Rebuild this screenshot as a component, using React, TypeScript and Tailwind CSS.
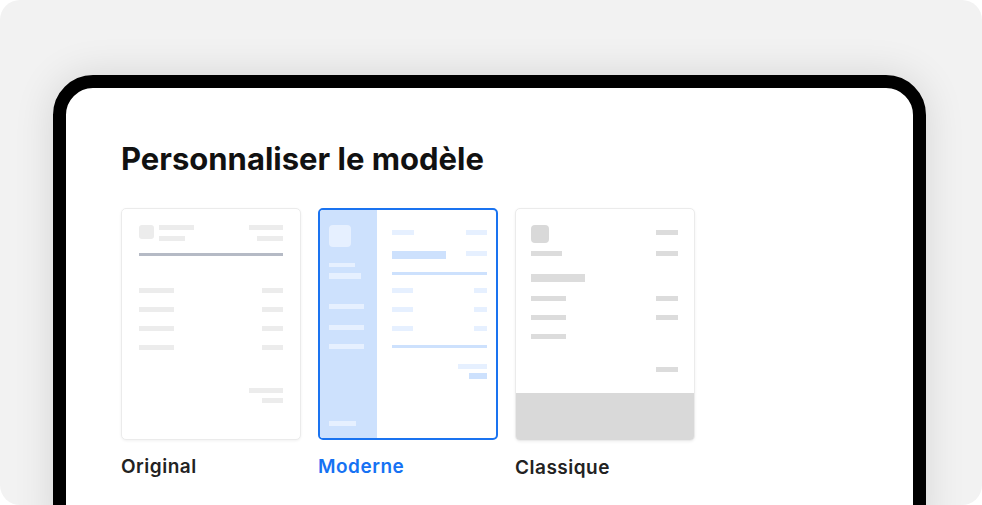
import React from "react";

function Bar({ w, h = 5, c, className = "" }: { w: number; h?: number; c: string; className?: string }) {
  // tiny placeholder bar inside a template thumbnail
  return <div className={`shrink-0 ${className}`} style={{ width: w, height: h, backgroundColor: c }} />;
}

function OriginalThumb() {
  const line = "#ececec";
  return (
    <div className="h-[232px] w-[180px] rounded-[5px] border border-[#ebebeb] bg-white px-[17px] pt-[16px] shadow-[0_1px_3px_rgba(0,0,0,0.06)]">
      <div className="flex justify-between">
        <div className="flex gap-[5px]">
          <div className="h-[14px] w-[15px] rounded-[3px] bg-[#ececec]" />
          <div className="flex flex-col">
            <Bar w={35} c={line} />
            <Bar w={26} c={line} className="mt-[6px]" />
          </div>
        </div>
        <div className="flex flex-col items-end">
          <Bar w={34} c={line} />
          <Bar w={26} c={line} className="mt-[6px]" />
        </div>
      </div>
      <div className="mt-[12px] h-[3px] bg-[#b5bac5]" />
      <div className="mt-[32px] flex flex-col gap-[14px]">
        {[0, 1, 2, 3].map((i) => (
          <div key={i} className="flex justify-between">
            <Bar w={35} c={line} />
            <Bar w={21} c={line} />
          </div>
        ))}
      </div>
      <div className="mt-[38px] flex flex-col items-end gap-[5px]">
        <Bar w={34} c={line} />
        <Bar w={21} c={line} />
      </div>
    </div>
  );
}

function ModerneThumb() {
  const dark = "#cde1fd";
  const light = "#e6f0ff";
  return (
    <div className="flex h-[232px] w-[180px] overflow-hidden rounded-[5px] border-2 border-[#1a73f0] bg-white">
      <div className="flex w-[57px] flex-col bg-[#cde1fd] pb-[12px] pl-[9px] pt-[15px]">
        <div className="h-[22px] w-[22px] rounded-[4px] bg-[#e6f0ff]" />
        <Bar w={26} h={4} c={light} className="mt-[16px]" />
        <Bar w={32} h={6} c={light} className="mt-[6px]" />
        <Bar w={35} c={light} className="mt-[25px]" />
        <Bar w={35} c={light} className="mt-[16px]" />
        <Bar w={35} c={light} className="mt-[14px]" />
        <Bar w={27} c={light} className="mt-auto" />
      </div>
      <div className="flex flex-1 flex-col pl-[15px] pr-[9px] pt-[20px]">
        <div className="flex justify-between">
          <Bar w={22} c={light} />
          <Bar w={21} c={light} />
        </div>
        <div className="mt-[16px] flex justify-between">
          <Bar w={54} h={8} c={dark} />
          <Bar w={21} c={light} />
        </div>
        <div className="mt-[13px] h-[3px] bg-[#cde1fd]" />
        <div className="mt-[13px] flex flex-col gap-[14px]">
          {[0, 1, 2].map((i) => (
            <div key={i} className="flex justify-between">
              <Bar w={21} c={light} />
              <Bar w={13} c={light} />
            </div>
          ))}
        </div>
        <div className="mt-[14px] h-[3px] bg-[#cde1fd]" />
        <div className="mt-[16px] flex flex-col items-end gap-[4px]">
          <Bar w={29} c={light} />
          <Bar w={18} h={6} c={dark} />
        </div>
      </div>
    </div>
  );
}

function ClassiqueThumb() {
  const line = "#dcdcdc";
  return (
    <div className="flex h-[233px] w-[180px] flex-col overflow-hidden rounded-[5px] border border-[#ebebeb] bg-white shadow-[0_1px_3px_rgba(0,0,0,0.06)]">
      <div className="pl-[15px] pr-[16px] pt-[16px]">
        <div className="flex justify-between">
          <div className="h-[18px] w-[18px] rounded-[4px] bg-[#d9d9d9]" />
          <Bar w={22} c={line} className="mt-[5px]" />
        </div>
        <div className="mt-[8px] flex justify-between">
          <Bar w={31} c={line} />
          <Bar w={22} c={line} />
        </div>
        <Bar w={54} h={8} c={line} className="mt-[18px]" />
        <div className="mt-[14px] flex flex-col gap-[14px]">
          <div className="flex justify-between">
            <Bar w={35} c={line} />
            <Bar w={22} c={line} />
          </div>
          <div className="flex justify-between">
            <Bar w={35} c={line} />
            <Bar w={22} c={line} />
          </div>
          <div className="flex justify-between">
            <Bar w={35} c={line} />
          </div>
        </div>
        <div className="mt-[28px] flex justify-end">
          <Bar w={22} c={line} />
        </div>
      </div>
      <div className="mt-auto h-[47px] bg-[#d9d9d9]" />
    </div>
  );
}

export default function App() {
  const templates = [
    { name: "Original", thumb: <OriginalThumb />, active: false },
    { name: "Moderne", thumb: <ModerneThumb />, active: true },
    { name: "Classique", thumb: <ClassiqueThumb />, active: false },
  ];

  return (
    <div className="h-[505px] w-full bg-white" style={{ fontFamily: "Inter, 'Noto Sans', sans-serif" }}>
      <div className="h-full overflow-hidden rounded-[20px] bg-[#f2f2f2] pl-[53px] pt-[75px]">
        <div className="h-[480px] w-[873px] rounded-[40px] border-[13px] border-black bg-white pl-[55px] pt-[53px] shadow-[0_0_40px_rgba(0,0,0,0.12)]">
          <h1 className="text-[31px] font-bold leading-[36px] text-[#111]">
            Personnaliser le modèle
          </h1>
          <div className="mt-[31px] flex items-start gap-[17px]">
            {templates.map((t) => (
              <div key={t.name} className="flex flex-col">
                {t.thumb}
                <span
                  className={`mt-[15px] text-[19px] font-semibold leading-[24px] tracking-[0.5px] ${
                    t.active ? "text-[#1672f3]" : "text-[#222]"
                  }`}
                >
                  {t.name}
                </span>
              </div>
            ))}
          </div>
        </div>
      </div>
    </div>
  );
}
